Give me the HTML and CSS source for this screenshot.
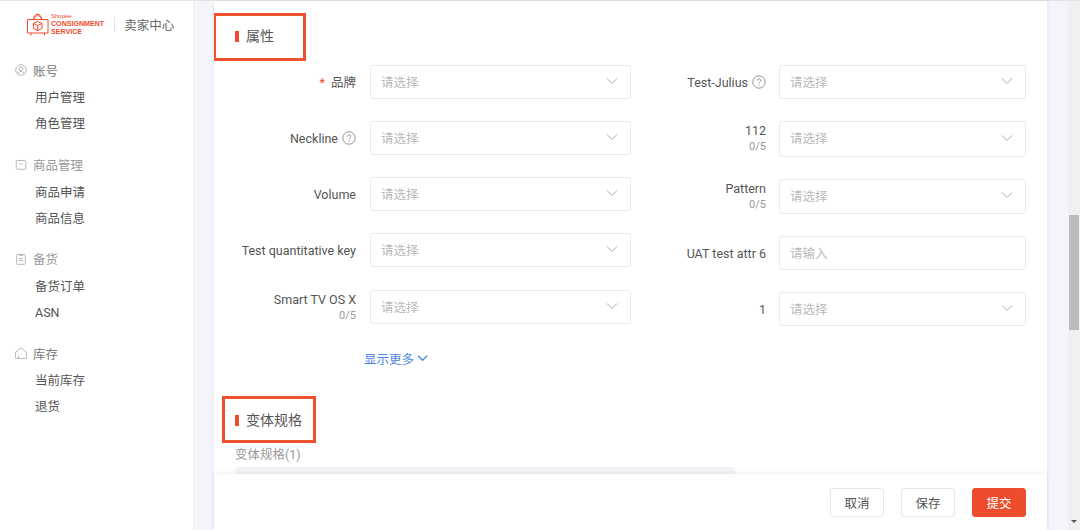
FILE: index.html
```html
<!DOCTYPE html>
<html lang="zh">
<head>
<meta charset="utf-8">
<title>卖家中心</title>
<link rel="stylesheet" href="styles.css">
</head>
<body>
<div class="app">
  <aside class="sidebar">
    <div class="brand">
      <svg class="brand-icon" viewBox="0 0 24 24" fill="none" stroke="#ee4d2d" stroke-width="1" stroke-linejoin="round">
        <path d="M1.5 6.5h20.5v13.5h-20.5z"/>
        <path d="M7.5 6.5c0-7 8-7 8 0"/>
        <path d="M7 6.5 11.7 1.5 16.500 6.5"/>
        <path d="M11.700 8.500l4.300 2v5l-4.300 2-4.300-2v-5zM7.400 10.500l4.300 2 4.300-2M11.700 12.500v5"/>
        <path d="M5 20v2.500M18.500 20v2.500"/>
      </svg>
      <div class="brand-text">
        <span class="brand-shopee">Shopee</span>
        <span class="brand-name">CONSIGNMENT</span>
        <span class="brand-name">SERVICE</span>
      </div>
      <span class="brand-divider"></span>
      <span class="brand-title">卖家中心</span>
    </div>
    <nav class="nav">
      <section class="nav-group">
        <div class="nav-head">
          <svg class="nav-icon" viewBox="0 0 12 12" fill="none" stroke="#a5a8b0" stroke-width=".8"><circle cx="6" cy="6" r="5.300"/><circle cx="6" cy="4.800" r="1.800"/><path d="M2.800 9.900c.6-3.200 5.800-3.200 6.400 0"/></svg>
          <span class="nav-head-text dark">账号</span>
        </div>
        <a class="nav-item">用户管理</a>
        <a class="nav-item">角色管理</a>
      </section>
      <section class="nav-group">
        <div class="nav-head">
          <svg class="nav-icon" viewBox="0 0 12 12" fill="none" stroke="#a5a8b0" stroke-width=".8"><rect x="1.200" y="1.500" width="9.600" height="8.800" rx="1"/><path d="M4.500 4.500c.5 1 2.500 1 3 0"/></svg>
          <span class="nav-head-text">商品管理</span>
        </div>
        <a class="nav-item">商品申请</a>
        <a class="nav-item">商品信息</a>
      </section>
      <section class="nav-group">
        <div class="nav-head">
          <svg class="nav-icon" viewBox="0 0 12 12" fill="none" stroke="#a5a8b0" stroke-width=".8"><rect x="1.700" y="1.500" width="8.600" height="9.800" rx=".8"/><path d="M4.500 .8v1.700h3V.8M4 5.500h4M4 7.500h4"/></svg>
          <span class="nav-head-text">备货</span>
        </div>
        <a class="nav-item">备货订单</a>
        <a class="nav-item">ASN</a>
      </section>
      <section class="nav-group">
        <div class="nav-head">
          <svg class="nav-icon" viewBox="0 0 12 12" fill="none" stroke="#a5a8b0" stroke-width=".8"><path d="M.6 5.200 6 .8l5.400 4.400v6.200H.6z"/><path d="M3.500 11.400V8.500"/></svg>
          <span class="nav-head-text dark">库存</span>
        </div>
        <a class="nav-item">当前库存</a>
        <a class="nav-item">退货</a>
      </section>
    </nav>
  </aside>

  <main class="main">
    <div class="card">
      <div class="content">
        <div class="section-head first">
          <span class="section-bar"></span><h2 class="section-title">属性</h2>
          <span class="mark mark-attr"></span>
        </div>
        <div class="form">
          <div class="col col-left">
            <div class="row">
              <div class="label"><span class="label-line"><span class="req">*</span>品牌</span></div>
              <div class="select">请选择<svg class="chev" viewBox="0 0 12 8"><path d="M1 1.500 6 6.500l5-5"/></svg></div>
            </div>
            <div class="row">
              <div class="label"><span class="label-line">Neckline<svg class="help" viewBox="0 0 14 14"><circle cx="7" cy="7" r="6.200"/><path d="M5.300 5.600c0-2.300 3.500-2.300 3.500 0 0 1.300-1.800 1.300-1.800 2.700M7 9.600v1"/></svg></span></div>
              <div class="select">请选择<svg class="chev" viewBox="0 0 12 8"><path d="M1 1.500 6 6.500l5-5"/></svg></div>
            </div>
            <div class="row">
              <div class="label"><span class="label-line">Volume</span></div>
              <div class="select">请选择<svg class="chev" viewBox="0 0 12 8"><path d="M1 1.500 6 6.500l5-5"/></svg></div>
            </div>
            <div class="row">
              <div class="label"><span class="label-line">Test quantitative key</span></div>
              <div class="select">请选择<svg class="chev" viewBox="0 0 12 8"><path d="M1 1.500 6 6.500l5-5"/></svg></div>
            </div>
            <div class="row tall">
              <div class="label"><span class="label-line">Smart TV OS X</span><span class="count">0/5</span></div>
              <div class="select">请选择<svg class="chev" viewBox="0 0 12 8"><path d="M1 1.500 6 6.500l5-5"/></svg></div>
            </div>
          </div>
          <div class="col col-right">
            <div class="row">
              <div class="label"><span class="label-line">Test-Julius<svg class="help" viewBox="0 0 14 14"><circle cx="7" cy="7" r="6.200"/><path d="M5.300 5.600c0-2.300 3.500-2.300 3.500 0 0 1.300-1.800 1.300-1.800 2.700M7 9.600v1"/></svg></span></div>
              <div class="select">请选择<svg class="chev" viewBox="0 0 12 8"><path d="M1 1.500 6 6.500l5-5"/></svg></div>
            </div>
            <div class="row tall">
              <div class="label"><span class="label-line">112</span><span class="count">0/5</span></div>
              <div class="select">请选择<svg class="chev" viewBox="0 0 12 8"><path d="M1 1.500 6 6.500l5-5"/></svg></div>
            </div>
            <div class="row tall">
              <div class="label"><span class="label-line">Pattern</span><span class="count">0/5</span></div>
              <div class="select">请选择<svg class="chev" viewBox="0 0 12 8"><path d="M1 1.500 6 6.500l5-5"/></svg></div>
            </div>
            <div class="row">
              <div class="label"><span class="label-line">UAT test attr 6</span></div>
              <div class="select">请输入</div>
            </div>
            <div class="row">
              <div class="label"><span class="label-line">1</span></div>
              <div class="select">请选择<svg class="chev" viewBox="0 0 12 8"><path d="M1 1.500 6 6.500l5-5"/></svg></div>
            </div>
          </div>
        </div>
        <a class="more">显示更多<svg class="more-chev" viewBox="0 0 12 8"><path d="M1 1.500 6 6.500l5-5"/></svg></a>
        <div class="section-head second">
          <span class="section-bar"></span><h2 class="section-title">变体规格</h2>
          <span class="mark mark-variant"></span>
        </div>
        <div class="variant-label">变体规格(1)</div>
        <div class="variant-table"></div>
      </div>
      <footer class="footer">
        <button class="btn">取消</button>
        <button class="btn">保存</button>
        <button class="btn primary">提交</button>
      </footer>
    </div>
  </main>

  <div class="scrollbar">
    <span class="thumb"></span>
    <span class="arrow"></span>
  </div>
</div>
</body>
</html>
```
FILE: styles.css
```css
* { box-sizing: border-box; }
html, body { margin: 0; height: 100%; overflow: hidden; }
body {
  font-family: Roboto, "Noto Sans CJK SC", sans-serif;
  font-size: 12.500px;
  color: #555;
  background: #f4f5fa;
}
.app {
  display: flex;
  height: 530px;
  border-top: 1px solid #e4e4e4;
}

/* Sidebar */
.sidebar {
  width: 194px;
  flex: none;
  background: #fff;
  border-right: 1px solid #f0f0f3;
}
.brand {
  display: flex;
  align-items: center;
  height: 50px;
  padding: 0 0 3px 26px;
}
.brand-icon { width: 24px; height: 24px; flex: none; }
.brand-text {
  display: flex;
  flex-direction: column;
  margin-left: 1px;
  color: #ee4d2d;
  font-family: "Liberation Sans", sans-serif;
  line-height: 8px;
}
.brand-shopee { font-size: 6px; line-height: 7px; }
.brand-name { font-size: 7.100px; font-weight: 700; }
.brand-divider {
  width: 1px;
  height: 15px;
  margin: 0 9px 0 10px;
  background: #e3e3e6;
}
.brand-title { font-size: 12.500px; color: #666; }

.nav { padding-top: 7.300px; }
.nav-group { display: flex; flex-direction: column; margin-bottom: 15.200px; }
.nav-head {
  display: flex;
  align-items: center;
  height: 26px;
  margin-bottom: 1.100px;
  padding: 0 0 2px 15px;
}
.nav-icon { width: 12px; height: 12px; flex: none; }
.nav-head-text { margin-left: 6px; color: #999; }
.nav-head-text.dark { color: #777; }
.nav-item {
  height: 26px;
  line-height: 26px;
  padding-left: 35px;
  color: #555;
}

/* Main */
.main {
  flex: 1;
  min-width: 0;
  padding: 0 21px 0 20px;
}
.card {
  display: flex;
  flex-direction: column;
  height: 529px;
  background: #fff;
  box-shadow: 0 0 4px rgba(0, 0, 0, .08);
}
.content {
  flex: 1;
  min-height: 0;
  overflow: hidden;
  padding: 0 21px;
}

.section-head {
  position: relative;
  display: flex;
  align-items: center;
  height: 22px;
}
.section-head.first { margin-top: 24px; }
.section-head.second { margin-top: 42px; }
.section-bar {
  width: 4px;
  height: 11px;
  margin-right: 7px;
  background: #ee4d2d;
}
.section-title {
  margin: 0;
  font-size: 14px;
  font-weight: 400;
  line-height: 22px;
  color: #555;
}
.mark {
  position: absolute;
  border: 3px solid #f0512d;
}
.mark-attr { left: -22px; top: -12px; width: 93px; height: 48px; }
.mark-variant { left: -13px; top: -13px; width: 94px; height: 47px; }

.form {
  display: flex;
  margin-top: 18px;
}
.col { display: flex; flex-direction: column; gap: 22px; }
.col-left { width: 396px; }
.col-right { width: 390px; margin-left: 5px; }

.row {
  display: flex;
  align-items: center;
  height: 34px;
}
.col-right .row.tall { height: 35.500px; }
.col-left .row.tall { margin-top: 1px; }
.label {
  flex: none;
  display: flex;
  flex-direction: column;
  align-items: flex-end;
  width: 121px;
  margin-right: 14px;
  line-height: 17px;
  color: #555;
}
.col-right .label { width: 130px; margin-right: 13px; }
.label-line { display: flex; align-items: center; white-space: nowrap; }
.req { margin-right: 6px; color: #ee4d2d; }
.count { font-size: 11px; line-height: 16px; color: #999; }
.help {
  width: 14px;
  height: 14px;
  margin-left: 4px;
  fill: none;
  stroke: #888;
  stroke-width: .9;
}
.select {
  flex: 1;
  display: flex;
  align-items: center;
  justify-content: space-between;
  align-self: stretch;
  padding: 0 12px 2px 10px;
  border: 1px solid #ebebeb;
  border-radius: 3px;
  color: #bbb;
  background: #fff;
}
.chev {
  width: 12px;
  height: 8px;
  fill: none;
  stroke: #aaa;
  stroke-width: 1;
}

.more {
  display: flex;
  align-items: center;
  height: 18px;
  margin: 23px 0 0 129px;
  color: #4a86e0;
}
.more-chev {
  width: 11px;
  height: 8px;
  margin-left: 3px;
  fill: none;
  stroke: #4a86e0;
  stroke-width: 1.400;
}

.variant-label {
  margin-top: 15px;
  height: 18px;
  line-height: 18px;
  color: #999;
}
.variant-table {
  width: 500px;
  height: 30px;
  margin-top: 3px;
  border-radius: 4px 4px 0 0;
  background: #f2f2f7;
}

.footer {
  flex: none;
  display: flex;
  justify-content: flex-end;
  align-items: flex-start;
  gap: 17px;
  height: 56px;
  padding: 14px 21px 0 0;
  background: #fff;
  box-shadow: 0 -1px 4px rgba(0, 0, 0, .07);
}
.btn {
  width: 54px;
  height: 29px;
  padding: 0;
  border: 1px solid #e6e6ea;
  border-radius: 3px;
  background: #fff;
  font: inherit;
  color: #555;
}
.btn.primary {
  border-color: #ee4d2d;
  background: #ee4d2d;
  color: #fff;
}

/* Scrollbar */
.scrollbar {
  flex: none;
  display: flex;
  flex-direction: column;
  align-items: center;
  width: 12px;
  background: #f0f0f0;
}
.thumb {
  width: 10px;
  height: 115px;
  margin-top: 214px;
  background: #bcbcbc;
}
.arrow {
  margin-top: 190px;
  width: 0;
  height: 0;
  border-left: 3px solid transparent;
  border-right: 3px solid transparent;
  border-top: 3px solid #555;
}
```
